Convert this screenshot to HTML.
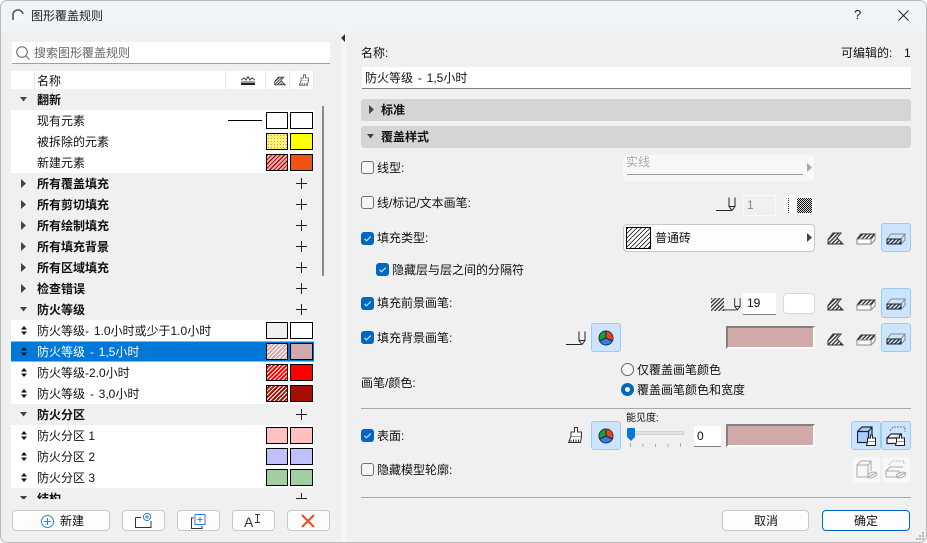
<!DOCTYPE html>
<html lang="zh"><head><meta charset="utf-8">
<style>
html,body{margin:0;padding:0;width:927px;height:543px;overflow:hidden;background:#fff}
body{font-family:"Liberation Sans","Noto Sans CJK SC",sans-serif;font-size:12px;color:#111}
#d{position:absolute;left:0;top:0;width:925px;height:541px;background:#f0f0f0;border:1px solid #b8b8b8;border-radius:7px;overflow:hidden}
#w{position:absolute;left:-1px;top:-1px;width:927px;height:543px}
#w div,#w svg,#w span{position:absolute}
.t{line-height:18px;white-space:nowrap}
.r .t{top:2px}
.b{font-weight:700}
.r{left:11px;width:303px;height:21px;background:#fff}
.g{background:#f0f0f0}
.s{top:2px;height:15px;border:1px solid #000;box-sizing:content-box}
.cb{width:11px;height:11px;border:1px solid #707070;border-radius:3px;background:#f6f6f6}
.ck{width:13px;height:13px;border-radius:3px;background:#0067c0}
.btn{background:#fdfdfd;border:1px solid #c8c8c8;border-radius:4px;box-sizing:border-box}
.on{background:#cce4ff;border:1px solid #99ccf5;border-radius:3px;box-sizing:border-box}
.bar{left:361px;width:550px;height:22px;background:#d5d5d5;border-radius:3px}
.ln{left:361px;width:550px;height:1px;background:#a8a8a8}
.i{background:#fff;border-bottom:1px solid #808080;box-sizing:border-box}
.pk{background:#d2a9a9;border:2px solid;border-color:#808080 #fff #fff #808080;box-sizing:border-box}
.ws{word-spacing:1.500px}
</style></head><body>
<svg width="0" height="0" style="position:absolute">
<defs>
<pattern id="ht" width="2.800" height="2.800" patternUnits="userSpaceOnUse" patternTransform="rotate(45)"><rect width="1.200" height="2.800" fill="#222"/></pattern>
<symbol id="tr" viewBox="0 0 7 5"><path d="M0 0H7L3.500 4.500Z" fill="#444"/></symbol>
<symbol id="tc" viewBox="0 0 5 9"><path d="M0 0V9L5 4.500Z" fill="#444"/></symbol>
<symbol id="pl" viewBox="0 0 11 11"><path d="M5.500 0V11M0 5.500H11" stroke="#222" fill="none"/></symbol>
<symbol id="dr" viewBox="0 0 6 9"><path d="M3 0L6 3.500H0ZM3 9L0 5.500H6Z" fill="#111"/></symbol>
<symbol id="pn" viewBox="0 0 20 15"><path d="M0 13.500H15M13 .5V9.500L16 13.500L19 9.500V.5M13 9.500H19" stroke="#222" fill="none"/></symbol>
<symbol id="f1" viewBox="0 0 17 13"><path d="M1 12V7.500L6 1H14L10 6L16 12Z" fill="url(#ht)" stroke="#333"/></symbol>
<symbol id="f2" viewBox="0 0 20 13"><path d="M1 7L5 2H19L15 7Z" fill="url(#ht)" stroke="#333"/><path d="M1 7H15V12H1ZM15 12L19 8V2" stroke="#888" fill="#fff"/></symbol>
<symbol id="f3" viewBox="0 0 20 13"><path d="M1 7L5 2H19V8L15 12M15 7L19 2" fill="none" stroke="#888"/><path d="M1 7H15V12H1Z" fill="url(#ht)" stroke="#222"/></symbol>
<symbol id="pie" viewBox="0 0 16 16"><circle cx="8" cy="8" r="7.500" fill="#222"/><path d="M8 8V1.200A6.800 6.800 0 0 1 14.400 10Z" fill="#e8402a"/><path d="M8 8L14.400 10A6.800 6.800 0 0 1 2 11Z" fill="#2f7ff0"/><path d="M8 8L2 11A6.800 6.800 0 0 1 8 1.200Z" fill="#1c9a46"/><path d="M8 1V8L14.500 11M8 8L1.500 11" stroke="#222" fill="none"/></symbol>
<symbol id="chk" viewBox="0 0 13 13"><path d="M3.500 6.800L5.500 8.800L9.800 4.500" stroke="#cfe6fa" stroke-width="1.100" fill="none"/></symbol>
<symbol id="br" viewBox="0 0 16 16"><path d="M6.500 .5H9.500V5H13.500V9.500H3V5H6.500Z" stroke="#333" fill="#fff"/><path d="M3 9.500L.5 15.500H12.500L13.500 9.500" stroke="#333" fill="#fff"/><path d="M3 15V13M5.500 15V12.500M8 15V12.500M10.500 15V12.500" stroke="#333"/></symbol>
</defs></svg>
<div id="d"><div id="w">
<div style="left:0;top:0;width:927px;height:31px;background:#eff4f9"></div>
<svg style="left:11px;top:9px" width="14" height="13" viewBox="0 0 14 13"><rect width="14" height="13" fill="#f6f6f6"/><path d="M2 11V7A5 5 0 0 1 12 5" stroke="#555" stroke-width="1.600" fill="none"/></svg>
<div class="t" style="left:31px;top:7px;color:#222">图形覆盖规则</div>
<div class="t" style="left:854px;top:6px;font-size:13px;color:#222">?</div>
<svg style="left:898px;top:10px" width="11" height="11"><path d="M.5 .5L10.500 10.500M10.500 .5L.5 10.500" stroke="#222" fill="none"/></svg>
<div style="left:341px;top:31px;width:5px;height:512px;background:#f6f6f6"></div>
<svg style="left:341px;top:34px" width="4" height="8" viewBox="0 0 4 8"><path d="M4 0V8L0 4Z" fill="#333"/></svg>

<!-- search -->
<div class="i" style="left:12px;top:42px;width:318px;height:22px;border-color:#a0a0a0"></div>
<svg style="left:16px;top:46px" width="14" height="14"><circle cx="6" cy="6" r="5.300" stroke="#666" fill="none"/><path d="M10 10L13.500 13.500" stroke="#666"/></svg>
<div class="t" style="left:34px;top:44px;color:#666">搜索图形覆盖规则</div>

<!-- header -->
<div style="left:11px;top:71px;width:303px;height:18px;background:#fff"></div>
<div style="left:34px;top:71px;width:1px;height:18px;background:#e4e4e4"></div>
<div style="left:225px;top:71px;width:1px;height:18px;background:#e4e4e4"></div>
<div style="left:265px;top:71px;width:1px;height:18px;background:#e4e4e4"></div>
<div style="left:289px;top:71px;width:1px;height:18px;background:#e4e4e4"></div>
<div style="left:313px;top:71px;width:1px;height:18px;background:#e4e4e4"></div>
<div class="t" style="left:37px;top:72px">名称</div>
<svg style="left:241px;top:76px" width="14" height="10"><path d="M0 4L3 2L5 4L7 .5L9 4L11 2L14 4M0 6H14" stroke="#444" fill="none"/><rect y="7" width="14" height="2" fill="#222"/></svg>
<svg style="left:274px;top:76px" width="12" height="10" viewBox="0 0 17 13"><use href="#f1"/></svg>
<svg style="left:299px;top:74px" width="11" height="12" viewBox="0 0 16 16"><use href="#br"/></svg>

<!-- list -->
<div style="left:11px;top:89px;width:303px;height:410px;overflow:hidden;background:#fff">
<div id="l" style="left:-11px;top:-89px;width:330px;height:520px">

<div class="r g" style="top:89px"><svg style="left:9px;top:8px" width="7" height="5"><use href="#tr"/></svg><div class="t b" style="left:26px">翻新</div></div>

<div class="r" style="top:110px"><div class="t" style="left:26px">现有元素</div><div style="left:217px;top:10px;width:34px;height:1px;background:#000"></div><div class="s" style="left:255px;width:20px;background:#fff"></div><div class="s" style="left:279px;width:21px;background:#fff"></div></div>

<div class="r" style="top:131px"><div class="t" style="left:26px">被拆除的元素</div><div class="s" style="left:255px;width:20px;background:#fff27a radial-gradient(#b8a838 .5px,transparent .7px) 0 0/3px 3px"></div><div class="s" style="left:279px;width:21px;background:#ff0"></div></div>

<div class="r" style="top:152px"><div class="t" style="left:26px">新建元素</div><div class="s" style="left:255px;width:20px;background:#ffa0a0 repeating-linear-gradient(135deg,#7a0000 0 .8px,transparent .8px 3px)"></div><div class="s" style="left:279px;width:21px;background:#f05414"></div></div>

<div class="r g" style="top:173px"><svg style="left:10px;top:6px" width="5" height="9"><use href="#tc"/></svg><div class="t b" style="left:26px">所有覆盖填充</div><svg style="left:285px;top:5px" width="11" height="11"><use href="#pl"/></svg></div>
<div class="r g" style="top:194px"><svg style="left:10px;top:6px" width="5" height="9"><use href="#tc"/></svg><div class="t b" style="left:26px">所有剪切填充</div><svg style="left:285px;top:5px" width="11" height="11"><use href="#pl"/></svg></div>
<div class="r g" style="top:215px"><svg style="left:10px;top:6px" width="5" height="9"><use href="#tc"/></svg><div class="t b" style="left:26px">所有绘制填充</div><svg style="left:285px;top:5px" width="11" height="11"><use href="#pl"/></svg></div>
<div class="r g" style="top:236px"><svg style="left:10px;top:6px" width="5" height="9"><use href="#tc"/></svg><div class="t b" style="left:26px">所有填充背景</div><svg style="left:285px;top:5px" width="11" height="11"><use href="#pl"/></svg></div>
<div class="r g" style="top:257px"><svg style="left:10px;top:6px" width="5" height="9"><use href="#tc"/></svg><div class="t b" style="left:26px">所有区域填充</div><svg style="left:285px;top:5px" width="11" height="11"><use href="#pl"/></svg></div>
<div class="r g" style="top:278px"><svg style="left:10px;top:6px" width="5" height="9"><use href="#tc"/></svg><div class="t b" style="left:26px">检查错误</div><svg style="left:285px;top:5px" width="11" height="11"><use href="#pl"/></svg></div>
<div class="r g" style="top:299px"><svg style="left:9px;top:8px" width="7" height="5"><use href="#tr"/></svg><div class="t b" style="left:26px">防火等级</div><svg style="left:285px;top:5px" width="11" height="11"><use href="#pl"/></svg></div>

<div class="r" style="top:320px"><svg style="left:10px;top:6px" width="6" height="9"><use href="#dr"/></svg><div class="t ws" style="left:26px">防火等级- 1.0小时或少于1.0小时</div><div class="s" style="left:255px;width:20px;background:#f0f0f0"></div><div class="s" style="left:279px;width:21px;background:#fff"></div></div>

<div class="r" style="top:341px;background:#0078d7;box-shadow:inset 0 1px 0 #e8a060,inset 0 -1px 0 #e8a060"><svg style="left:10px;top:6px" width="6" height="9"><use href="#dr"/></svg><div class="t ws" style="left:26px;color:#fff">防火等级 - 1,5小时</div><div class="s" style="left:255px;width:20px;background:#d2a9a9 repeating-linear-gradient(135deg,#fff 0 1px,transparent 1px 3px)"></div><div class="s" style="left:279px;width:21px;background:#d2a9a9"></div></div>

<div class="r" style="top:362px"><svg style="left:10px;top:6px" width="6" height="9"><use href="#dr"/></svg><div class="t" style="left:26px">防火等级-2.0小时</div><div class="s" style="left:255px;width:20px;background:#f00 repeating-linear-gradient(135deg,#fff 0 1px,transparent 1px 3px)"></div><div class="s" style="left:279px;width:21px;background:#f00"></div></div>

<div class="r" style="top:383px"><svg style="left:10px;top:6px" width="6" height="9"><use href="#dr"/></svg><div class="t ws" style="left:26px">防火等级 - 3,0小时</div><div class="s" style="left:255px;width:20px;background:#a50f00 repeating-linear-gradient(135deg,#fff 0 1px,transparent 1px 3px)"></div><div class="s" style="left:279px;width:21px;background:#a50f00"></div></div>

<div class="r g" style="top:404px"><svg style="left:9px;top:8px" width="7" height="5"><use href="#tr"/></svg><div class="t b" style="left:26px">防火分区</div><svg style="left:285px;top:5px" width="11" height="11"><use href="#pl"/></svg></div>

<div class="r" style="top:425px"><svg style="left:10px;top:6px" width="6" height="9"><use href="#dr"/></svg><div class="t" style="left:26px">防火分区 1</div><div class="s" style="left:255px;width:20px;background:#ffc0c0"></div><div class="s" style="left:279px;width:21px;background:#ffc0c0"></div></div>
<div class="r" style="top:446px"><svg style="left:10px;top:6px" width="6" height="9"><use href="#dr"/></svg><div class="t" style="left:26px">防火分区 2</div><div class="s" style="left:255px;width:20px;background:#c0c0ff"></div><div class="s" style="left:279px;width:21px;background:#c0c0ff"></div></div>
<div class="r" style="top:467px"><svg style="left:10px;top:6px" width="6" height="9"><use href="#dr"/></svg><div class="t" style="left:26px">防火分区 3</div><div class="s" style="left:255px;width:20px;background:#a0d0a0"></div><div class="s" style="left:279px;width:21px;background:#a0d0a0"></div></div>
<div class="r g" style="top:488px"><svg style="left:9px;top:8px" width="7" height="5"><use href="#tr"/></svg><div class="t b" style="left:26px">结构</div><svg style="left:285px;top:5px" width="11" height="11"><use href="#pl"/></svg></div>
</div></div>
<div style="left:322px;top:106px;width:2px;height:170px;background:#8a8a8a"></div>

<!-- bottom-left buttons -->
<div class="btn" style="left:12px;top:510px;width:98px;height:21px"></div>
<svg style="left:41px;top:515px" width="13" height="13"><circle cx="6.500" cy="6.500" r="6" stroke="#2f7fe0" fill="none"/><path d="M6.500 3V10M3 6.500H10" stroke="#2f7fe0"/></svg>
<div class="t" style="left:60px;top:512px">新建</div>
<div class="btn" style="left:122px;top:510px;width:43px;height:21px"></div>
<svg style="left:135px;top:513px" width="17" height="15"><path d="M.5 4.500V14.500H16V8M.5 4.500H6" stroke="#333" fill="none"/><circle cx="12" cy="4" r="3.600" stroke="#2f7fe0" fill="#fff"/><path d="M12 2V6M10 4H14" stroke="#2f7fe0"/></svg>
<div class="btn" style="left:177px;top:510px;width:43px;height:21px"></div>
<svg style="left:191px;top:514px" width="15" height="15"><path d="M3 4H.5V14.500H11V12" stroke="#333" fill="none"/><rect x="4" y=".5" width="10" height="10" stroke="#2f7fe0" fill="#fff"/><path d="M9 3V8M6.500 5.500H11.500" stroke="#2f7fe0"/></svg>
<div class="btn" style="left:232px;top:510px;width:43px;height:21px"></div>
<div class="t" style="left:244px;top:513px;font-size:14px;color:#333">A</div>
<svg style="left:255px;top:514px" width="6" height="9"><path d="M0 .5H5M0 8.500H5M2.500 .5V8.500" stroke="#333" fill="none"/></svg>
<div class="btn" style="left:287px;top:510px;width:43px;height:21px"></div>
<svg style="left:301px;top:514px" width="14" height="14"><path d="M1 1L13 13M13 1L1 13" stroke="#f0502a" stroke-width="2.200"/></svg>

<!-- right -->
<div class="t" style="left:361px;top:44px">名称:</div>
<div class="t" style="left:841px;top:44px">可编辑的:</div>
<div class="t" style="left:904px;top:44px">1</div>
<div class="i" style="left:362px;top:67px;width:549px;height:22px"></div>
<div class="t ws" style="left:365px;top:69px">防火等级 - 1,5小时</div>

<div class="bar" style="top:99px"></div>
<svg style="left:369px;top:105px" width="5" height="9"><use href="#tc"/></svg>
<div class="t b" style="left:381px;top:101px">标准</div>
<div class="bar" style="top:126px"></div>
<svg style="left:367px;top:134px" width="7" height="5"><use href="#tr"/></svg>
<div class="t b" style="left:381px;top:128px">覆盖样式</div>

<div class="cb" style="left:361px;top:161px"></div>
<div class="t" style="left:377px;top:159px">线型:</div>
<div style="left:623px;top:155px;width:191px;height:26px;background:#f8f8f8;border-radius:4px"></div>
<div class="t" style="left:626px;top:153px;color:#aaa">实线</div>
<div style="left:627px;top:174px;width:176px;height:1px;background:#999"></div>
<svg style="left:807px;top:163px;opacity:.45" width="5" height="9"><use href="#tc"/></svg>

<div class="cb" style="left:361px;top:196px"></div>
<div class="t" style="left:377px;top:194px">线/标记/文本画笔:</div>
<svg style="left:716px;top:197px" width="20" height="15"><use href="#pn"/></svg>
<div style="left:743px;top:195px;width:33px;height:21px;border:1px solid #fafafa;box-sizing:border-box;background:#f0f0f0"></div>
<div class="t" style="left:747px;top:196px;color:#888">1</div>
<div style="left:784px;top:195px;width:30px;height:20px;background:#f8f8f8;border-radius:3px"></div>
<svg style="left:788px;top:198px" width="2" height="15"><path d="M.5 0V15" stroke="#222" stroke-dasharray="1 1"/></svg>
<div style="left:797px;top:198px;width:15px;height:15px;background:#444 repeating-conic-gradient(#111 0 25%,#ddd 0 50%) 0 0/2px 2px"></div>

<div class="ck" style="left:361px;top:232px"></div><svg style="left:361px;top:232px" width="13" height="13"><use href="#chk"/></svg>
<div class="t" style="left:377px;top:229px">填充类型:</div>
<div class="btn" style="left:623px;top:224px;width:192px;height:28px"></div>
<div style="left:626px;top:227px;width:23px;height:20px;border:1px solid #000;background:#fff repeating-linear-gradient(135deg,#000 0 .9px,transparent .9px 3.200px)"></div>
<div class="t" style="left:655px;top:229px">普通砖</div>
<svg style="left:807px;top:233px" width="5" height="9"><use href="#tc"/></svg>
<svg style="left:827px;top:232px" width="17" height="13"><use href="#f1"/></svg>
<svg style="left:856px;top:232px" width="20" height="13"><use href="#f2"/></svg>
<div class="on" style="left:881px;top:223px;width:30px;height:29px"></div>
<svg style="left:886px;top:232px" width="20" height="13"><use href="#f3"/></svg>

<div class="ck" style="left:376px;top:263px"></div><svg style="left:376px;top:263px" width="13" height="13"><use href="#chk"/></svg>
<div class="t" style="left:392px;top:261px">隐藏层与层之间的分隔符</div>

<div class="ck" style="left:361px;top:297px"></div><svg style="left:361px;top:297px" width="13" height="13"><use href="#chk"/></svg>
<div class="t" style="left:377px;top:294px">填充前景画笔:</div>
<svg style="left:711px;top:298px" width="13" height="13"><rect width="13" height="13" fill="url(#ht)"/></svg>
<svg style="left:723px;top:297px" width="18" height="15" viewBox="0 0 20 15"><use href="#pn"/></svg>
<div class="i" style="left:743px;top:293px;width:33px;height:22px"></div>
<div class="t" style="left:747px;top:294px">19</div>
<div style="left:783px;top:293px;width:32px;height:21px;background:#fff;border:1px solid #d8d8d8;border-radius:4px;box-sizing:border-box"></div>
<svg style="left:827px;top:298px" width="17" height="13"><use href="#f1"/></svg>
<svg style="left:856px;top:298px" width="20" height="13"><use href="#f2"/></svg>
<div class="on" style="left:881px;top:288px;width:30px;height:30px"></div>
<svg style="left:886px;top:297px" width="20" height="13"><use href="#f3"/></svg>

<div class="ck" style="left:361px;top:331px"></div><svg style="left:361px;top:331px" width="13" height="13"><use href="#chk"/></svg>
<div class="t" style="left:377px;top:329px">填充背景画笔:</div>
<svg style="left:566px;top:331px" width="20" height="15"><use href="#pn"/></svg>
<div class="on" style="left:591px;top:323px;width:30px;height:29px"></div>
<svg style="left:598px;top:330px" width="16" height="16"><use href="#pie"/></svg>
<div class="pk" style="left:726px;top:326px;width:89px;height:23px"></div>
<svg style="left:827px;top:333px" width="17" height="13"><use href="#f1"/></svg>
<svg style="left:856px;top:333px" width="20" height="13"><use href="#f2"/></svg>
<div class="on" style="left:881px;top:323px;width:30px;height:29px"></div>
<svg style="left:886px;top:332px" width="20" height="13"><use href="#f3"/></svg>

<div style="left:621px;top:363px;width:11px;height:11px;border:1px solid #666;border-radius:50%;background:#f6f6f6"></div>
<div class="t" style="left:637px;top:361px">仅覆盖画笔颜色</div>
<div style="left:621px;top:383px;width:13px;height:13px;border-radius:50%;background:#0067c0"></div>
<div style="left:625px;top:387px;width:5px;height:5px;border-radius:50%;background:#fff"></div>
<div class="t" style="left:637px;top:381px">覆盖画笔颜色和宽度</div>
<div class="t" style="left:361px;top:374px">画笔/颜色:</div>

<div class="ln" style="top:408px"></div>

<div class="ck" style="left:361px;top:429px"></div><svg style="left:361px;top:429px" width="13" height="13"><use href="#chk"/></svg>
<div class="t" style="left:377px;top:427px">表面:</div>
<svg style="left:568px;top:427px" width="16" height="16"><use href="#br"/></svg>
<div class="on" style="left:591px;top:421px;width:30px;height:29px"></div>
<svg style="left:598px;top:428px" width="16" height="16"><use href="#pie"/></svg>
<div class="t" style="left:626px;top:410px;font-size:10px">能见度:</div>
<div style="left:627px;top:431px;width:57px;height:4px;background:#dfe3e3;border:1px solid #d0d4d4;box-sizing:border-box"></div>
<svg style="left:627px;top:428px" width="8" height="13"><path d="M0 1Q0 0 1 0H7Q8 0 8 1V9L4 13L0 9Z" fill="#0078d7"/></svg>
<svg style="left:630px;top:443px" width="52" height="5"><path d="M.5 0V4M13 1V4M25.500 1V4M38 1V4M50.500 0V4" stroke="#aaa" fill="none"/></svg>
<div class="i" style="left:694px;top:426px;width:27px;height:21px"></div>
<div class="t" style="left:697px;top:427px">0</div>
<div class="pk" style="left:726px;top:424px;width:89px;height:23px"></div>
<div class="on" style="left:851px;top:421px;width:30px;height:29px"></div>
<div class="on" style="left:881px;top:421px;width:30px;height:29px"></div>
<svg style="left:857px;top:426px" width="21" height="21"><path d="M.5 5.500H11.500V16.500H.5ZM.5 5.500L5 1H15V11.500M11.500 5.500L15 1" stroke="#223" stroke-width="1.200" fill="#a8ceff"/><path d="M13.500 9H15.500V12H18.500V16H10.500V12H13.500Z" fill="#fff" stroke="#222"/><path d="M10.500 16L9.500 19.500H18.500V16" stroke="#222" fill="#fff"/></svg>
<svg style="left:886px;top:426px" width="21" height="21"><path d="M4 5L7 1H19V6" stroke="#777" stroke-dasharray="2 1" fill="none"/><path d="M1 12L5 8H16M1 12H12V17.500H1Z" stroke="#223" stroke-width="1.200" fill="#fff"/><path d="M13.500 9H15.500V12H18.500V16H10.500V12H13.500Z" fill="#fff" stroke="#222"/><path d="M10.500 16L9.500 19.500H18.500V16" stroke="#222" fill="#fff"/></svg>

<div class="cb" style="left:361px;top:463px"></div>
<div class="t" style="left:377px;top:461px">隐藏模型轮廓:</div>
<div style="left:853px;top:457px;width:27px;height:26px;background:#f8f8f8;border-radius:3px"></div>
<div style="left:883px;top:457px;width:27px;height:26px;background:#f8f8f8;border-radius:3px"></div>
<svg style="left:856px;top:460px" width="22" height="20"><path d="M1 5H12V17H1ZM1 5L5 1H15V11M12 5L15 1" stroke="#aaa" fill="none"/><ellipse cx="16" cy="15" rx="5" ry="2.500" transform="rotate(-20 16 15)" stroke="#aaa" fill="#f8f8f8"/><path d="M12 17L20 13" stroke="#aaa"/></svg>
<svg style="left:885px;top:460px" width="22" height="20"><path d="M4 5L7 1H19V5" stroke="#bbb" stroke-dasharray="2 1" fill="none"/><path d="M1 11L5 7H18M1 11H14V17H1Z" stroke="#aaa" fill="none"/><ellipse cx="16" cy="15" rx="5" ry="2.500" transform="rotate(-20 16 15)" stroke="#aaa" fill="#f8f8f8"/><path d="M12 17L20 13" stroke="#aaa"/></svg>

<div class="ln" style="top:497px"></div>
<div class="btn" style="left:722px;top:510px;width:87px;height:21px"></div>
<div class="t" style="left:754px;top:512px">取消</div>
<div class="btn" style="left:822px;top:510px;width:88px;height:21px;border-color:#0067c0"></div>
<div class="t" style="left:854px;top:512px">确定</div>
<svg style="left:915px;top:531px" width="10" height="10"><path d="M7 1h2v2h-2zM4 4h2v2h-2zM7 4h2v2h-2zM1 7h2v2h-2zM4 7h2v2h-2zM7 7h2v2h-2z" fill="#b4b4b4"/></svg>
</div></div>
</body></html>
